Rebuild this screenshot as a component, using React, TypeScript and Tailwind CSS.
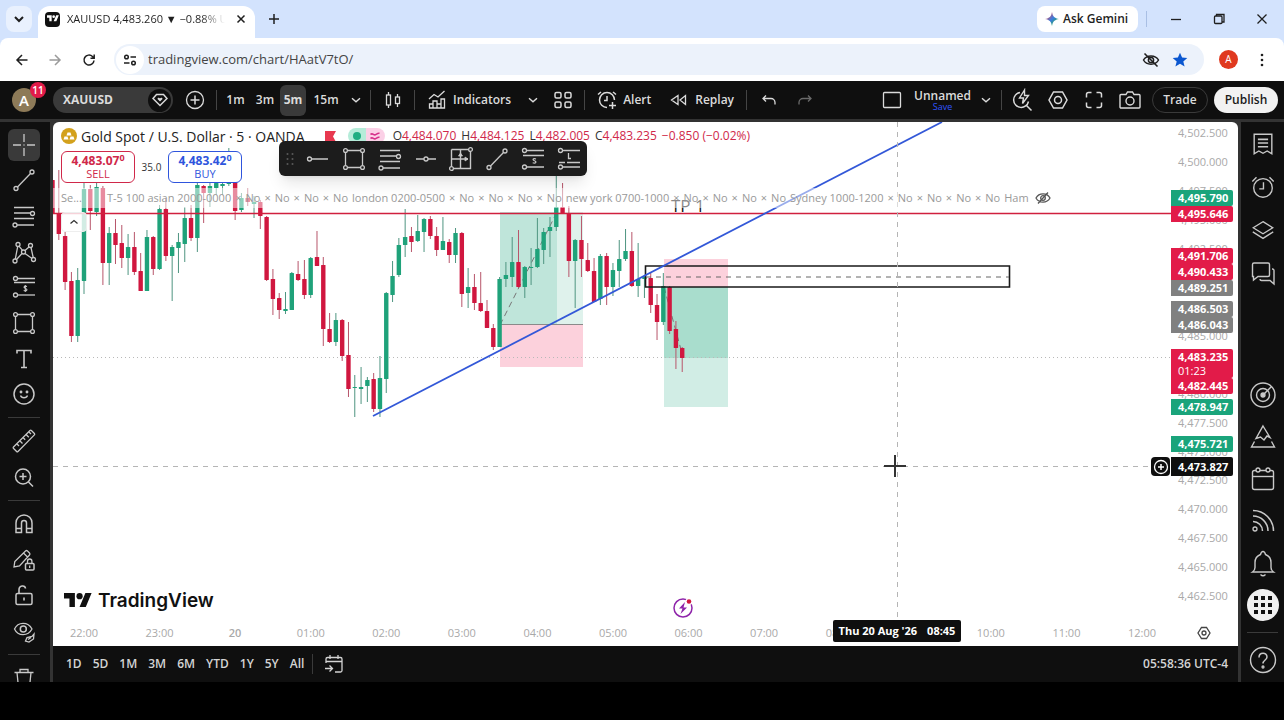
import React from "react";

type Candle = [number, number, number, number, 0 | 1];

/* Five-minute bars: body top, body bottom, wick top, wick bottom, 1 = up bar. */
const FIRST_BAR = -5;
const CANDLES: Candle[] = [
  [180, 214, 167, 235, 0], [213, 234, 170, 240, 0], [236, 282, 232, 290, 0], [281, 336, 272, 342, 0],
  [280, 336, 268, 342, 1], [189, 281, 182, 294, 1], [189, 211, 185, 230, 0], [187, 212, 183, 216, 1],
  [188, 263, 186, 285, 0], [233, 263, 227, 285, 1], [233, 245, 219, 264, 0], [243, 258, 225, 268, 0],
  [247, 258, 234, 275, 1], [247, 272, 232, 275, 0], [271, 291, 253, 291, 0], [237, 291, 230, 291, 1],
  [237, 269, 236, 275, 0], [209, 269, 205, 270, 1], [209, 256, 198, 261, 0], [247, 256, 245, 301, 1],
  [242, 248, 233, 273, 1], [218, 244, 207, 262, 1], [218, 238, 205, 241, 0], [185, 238, 180, 252, 1],
  [186, 193, 185, 223, 0], [186, 193, 182, 207, 1], [183, 188, 176, 195, 1], [184, 186, 176, 195, 1],
  [170, 184, 148, 186, 1], [170, 211, 160, 220, 0], [198, 210, 193, 212, 1], [198, 202, 188, 206, 0],
  [202, 204, 196, 218, 1], [202, 216, 200, 229, 0], [217, 280, 216, 281, 0], [279, 299, 269, 315, 0],
  [298, 310, 293, 319, 0], [309, 311, 292, 314, 1], [273, 310, 272, 310, 1], [274, 280, 261, 281, 0],
  [279, 295, 260, 299, 0], [258, 295, 257, 298, 1], [257, 266, 231, 266, 0], [265, 329, 257, 346, 0],
  [329, 342, 313, 343, 0], [320, 342, 313, 346, 1], [320, 356, 319, 361, 0], [355, 389, 322, 397, 0],
  [387, 388, 375, 417, 1], [387, 389, 367, 404, 1], [380, 386, 377, 402, 1], [379, 409, 373, 412, 0],
  [378, 409, 356, 417, 1], [293, 379, 292, 393, 1], [276, 295, 261, 302, 1], [245, 275, 238, 277, 1],
  [237, 245, 209, 257, 1], [236, 242, 227, 252, 0], [231, 241, 215, 242, 1], [219, 232, 218, 252, 1],
  [219, 236, 216, 239, 0], [236, 250, 227, 256, 0], [241, 250, 217, 250, 1], [242, 255, 239, 263, 0],
  [233, 255, 228, 263, 1], [233, 294, 232, 307, 0], [287, 293, 268, 308, 1], [287, 303, 274, 310, 0],
  [303, 311, 272, 312, 0], [311, 328, 300, 328, 0], [328, 347, 324, 350, 0], [279, 347, 277, 347, 1],
  [275, 279, 262, 287, 1], [262, 277, 237, 287, 1], [262, 287, 230, 288, 0], [267, 287, 266, 298, 1],
  [267, 268, 248, 285, 1], [249, 267, 218, 268, 1], [232, 250, 228, 264, 1], [227, 231, 217, 257, 1],
  [207, 227, 176, 231, 1], [207, 213, 183, 214, 0], [213, 261, 206, 277, 0], [240, 261, 239, 308, 1],
  [240, 259, 216, 277, 0], [260, 271, 243, 272, 0], [271, 302, 258, 302, 0], [256, 299, 254, 305, 1],
  [256, 287, 253, 305, 0], [270, 287, 263, 296, 1], [259, 271, 240, 287, 1], [251, 259, 229, 261, 1],
  [251, 286, 232, 287, 0], [279, 286, 243, 297, 1], [277, 279, 275, 298, 1], [278, 305, 272, 313, 0],
  [305, 322, 294, 340, 0], [286, 322, 273, 325, 1], [287, 331, 286, 334, 0], [329, 348, 321, 369, 0],
  [348, 358, 347, 372, 0],
];

const HOURS = ["22:00", "23:00", "20", "01:00", "02:00", "03:00", "04:00", "05:00", "06:00", "07:00", "08:00", "09:00", "10:00", "11:00", "12:00"];
const TICKS = [4502.5, 4500, 4497.5, 4495, 4492.5, 4490, 4487.5, 4485, 4482.5, 4480, 4477.5, 4475, 4472.5, 4470, 4467.5, 4465, 4462.5];
const fmt = (n: number) => n.toLocaleString("en-US", { minimumFractionDigits: 3 });

const TAGS: { y: number; text: string; cls: string; sub?: string }[] = [
  { y: 68, text: "4,495.790", cls: "bg-[#1aa47b]" },
  { y: 84, text: "4,495.646", cls: "bg-[#e21b49]" },
  { y: 126, text: "4,491.706", cls: "bg-[#e21b49]" },
  { y: 142, text: "4,490.433", cls: "bg-[#e21b49]" },
  { y: 158, text: "4,489.251", cls: "bg-[#808080]" },
  { y: 179, text: "4,486.503", cls: "bg-[#808080]" },
  { y: 195, text: "4,486.043", cls: "bg-[#808080]" },
  { y: 227, text: "4,483.235", cls: "bg-[#e21b49]", sub: "01:23" },
  { y: 256, text: "4,482.445", cls: "bg-[#e21b49]" },
  { y: 277, text: "4,478.947", cls: "bg-[#1aa47b]" },
  { y: 314, text: "4,475.721", cls: "bg-[#1aa47b]" },
];

function Icon({ children, className = "size-7", box = 28 }: { children: React.ReactNode; className?: string; box?: number }) {
  return (
    <svg aria-hidden="true" viewBox={`0 0 ${box} ${box}`} className={`shrink-0 ${className}`} fill="none" stroke="currentColor" strokeWidth="1.3">
      {children}
    </svg>
  );
}

const Chevron = () => <Icon className="size-3" box={12}><path d="M2 4.2 6 7.8l4-3.6" strokeWidth="1.4" /></Icon>;

const CrossIcon = () => <Icon><path d="M14 3v8M14 17v8M3 14h8M17 14h8M13.5 14h1" /></Icon>;
const TrendIcon = () => <Icon><circle cx="6" cy="22.5" r="2" /><circle cx="22" cy="6" r="2" /><path d="M7.5 21 20.5 7.5" /></Icon>;
const FibIcon = () => <Icon><path d="M4 5.5h20M4 11h16M4 16.5h20M7 23h17" /><circle cx="22.5" cy="11.5" r="2" /><circle cx="5" cy="23" r="2" /></Icon>;
const PatternIcon = () => (
  <Icon>
    <circle cx="5" cy="23" r="2" /><circle cx="8" cy="6.5" r="2" /><circle cx="13.5" cy="14" r="2" /><circle cx="20.5" cy="7.5" r="2" /><circle cx="23.5" cy="21.5" r="2" />
    <path d="M5.3 21 7.7 8.5M9 8.2l3.5 4.2M15 12.5l4-3.5M21 9.5l2.2 10M6.5 21.5l5.5-6M15 15.5l7 5" />
  </Icon>
);
const ForecastIcon = () => (
  <Icon>
    <circle cx="5.5" cy="5.5" r="2" /><path d="M7.5 5.5H25M4 9.5h21" /><circle cx="5.5" cy="22" r="2" /><path d="M7.5 22H25" />
    <path d="M17 13.5c-3-1.200-4 1.300-1.500 2s1.500 3.300-1.800 2M15.300 12v7" strokeWidth="1.1" />
  </Icon>
);
const ShortIcon = () => (
  <Icon>
    <circle cx="5.5" cy="5.5" r="2" /><path d="M7.5 5.5H25M4 10.500h21" /><circle cx="5.5" cy="22" r="2" /><path d="M7.5 22H25" />
    <path d="M17 14c-3-1.200-4 1-1.500 1.800s1.500 3-1.800 2" strokeWidth="1.2" />
  </Icon>
);
const LongIcon = () => <Icon><circle cx="5.5" cy="5.5" r="2" /><path d="M7.5 5.5H25M13.5 8v5.500H16M12 17.5h13M4 17.5h6M7.5 22H25" /><circle cx="5.5" cy="22" r="2" /></Icon>;
const RectIcon = () => <Icon><path d="M7.5 5.5h13M7.5 22.5h13M5.5 7.5v13M22.5 7.5v13" /><circle cx="5.5" cy="5.5" r="1.9" /><circle cx="22.5" cy="5.5" r="1.9" /><circle cx="5.5" cy="22.5" r="1.9" /><circle cx="22.5" cy="22.5" r="1.9" /></Icon>;
const TextIcon = () => <Icon><path d="M7 8.500V5.500h14v3M14 5.500v17M11 22.500h6" strokeWidth="1.6" /></Icon>;
const SmileIcon = () => <Icon><circle cx="14" cy="14" r="10" strokeWidth="1.5" /><path d="M10.500 15.500c1 3 6 3 7 0" /><circle cx="11" cy="12" r=".8" fill="currentColor" /><circle cx="17" cy="12" r=".8" fill="currentColor" /></Icon>;
const RulerIcon = () => <Icon><path d="M3.500 20 20 3.500a1 1 0 0 1 1.400 0l3 3a1 1 0 0 1 0 1.400L8 24.500a1 1 0 0 1-1.400 0l-3-3a1 1 0 0 1-.1-1.500ZM7 17l2 2M10 14l2.500 2.500M13.200 10.800l2 2M16.300 7.700l2.500 2.500M19 5l2 2" /></Icon>;
const ZoomIcon = () => <Icon><circle cx="13" cy="13.500" r="7.500" strokeWidth="1.500" /><path d="M18.500 19l4.500 4.500M13 10v7M9.500 13.500h7" strokeWidth="1.500" /></Icon>;
const MagnetIcon = () => <Icon><path d="M6 22.500V13a8 8 0 0 1 16 0v9.500h-5.500V13a2.500 2.500 0 0 0-5 0v9.500ZM6 18.500h5.500M16.500 18.500H22" strokeWidth="1.500" /></Icon>;
const PencilLockIcon = () => <Icon><path d="m4 21 .8-5.500L15.500 5a1.500 1.500 0 0 1 2 0l2 2a1.500 1.500 0 0 1 0 2L9.500 20ZM13.500 7l4 4" /><rect x="15.500" y="17.500" width="8.500" height="6.500" rx="1" strokeWidth="1.500" /><path d="M17.500 17.500v-2.300a2.200 2.200 0 0 1 4.400 0v2.300M19.700 19.500v2.500" /></Icon>;
const UnlockIcon = () => <Icon><rect x="6" y="12.500" width="16" height="11" rx="1.500" strokeWidth="1.500" /><path d="M9 12.500V9c0-5 6-5 6.500-1.500M14 16.500v3" strokeWidth="1.600" /></Icon>;
const EyeBrushIcon = () => <Icon><path d="M4.500 12C8 4.500 18 4.500 22 12 18 19.500 8 19.500 4.500 12Z" /><circle cx="13.300" cy="12" r="3" strokeWidth="1.500" /><path d="m15.500 24 1.500-3.500 5-1 2-2.500-.5 5-4.500 3ZM18 22.500l3-2" /></Icon>;
const TrashIcon = () => <Icon><path d="M4.500 8.500h19M10 8.500V5.500h8v3M7 8.500l1.500 15h11l1.500-15" /></Icon>;
const HLineIcon = () => <Icon><circle cx="5.500" cy="14" r="2" /><path d="M7.500 14H24" /></Icon>;
const HRayIcon = () => <Icon><circle cx="14" cy="14" r="2" /><path d="M4 14h8M16 14h8" /></Icon>;
const RangeIcon = () => <Icon><path d="M4.500 4.500h16.500M4.500 4.500v17M23.500 7v16.500H7M13.500 5v18M5 14h16" strokeWidth="1.400" /><path d="m11.500 11 2-3 2 3ZM18 12l3 2-3 2Z" fill="currentColor" strokeWidth=".8" /><circle cx="23.500" cy="4.500" r="1.900" /><circle cx="4.500" cy="23.500" r="1.900" /></Icon>;

function Tool({ label, children, active = false }: { label: string; children: React.ReactNode; active?: boolean }) {
  return (
    <button aria-label={label} className="flex min-h-0 flex-1 items-center justify-center">
      <span className={active ? "flex size-8 items-center justify-center rounded-md bg-[#3a3a3a]" : "flex items-center justify-center"}>{children}</span>
    </button>
  );
}

function TvMark({ className }: { className: string }) {
  return (
    <svg aria-hidden="true" viewBox="0 0 36 28" className={className} fill="currentColor">
      <path d="M14 22H7V11H0V4h14v18ZM28 22h-8l7.500-18h8L28 22Z" /><circle cx="20" cy="8" r="4" />
    </svg>
  );
}

function BrowserChrome() {
  return (
    <header className="shrink-0 bg-[#d3e3fd] font-['Open_Sans',sans-serif] text-[#1f1f1f]">
      <div className="flex h-[38px] items-center">
        <button aria-label="Search tabs" className="ml-1.5 flex size-[26px] items-center justify-center rounded-lg bg-[#e9f1fe]">
          <Icon className="size-3" box={12}><path d="m2 4 4 4 4-4" strokeWidth="2" /></Icon>
        </button>
        <div className="ml-1.5 flex h-8 w-[217px] items-center self-end rounded-t-xl bg-white pb-1.5 pl-[7px]">
          <span className="flex size-[15px] items-center justify-center rounded-sm bg-[#111] text-white"><TvMark className="w-3" /></span>
          <span className="ml-[7px] w-[158px] overflow-hidden bg-linear-to-r from-[#1f1f1f] from-85% to-transparent bg-clip-text text-[11px] whitespace-nowrap text-transparent">XAUUSD 4,483.260 ▼ −0.88% U</span>
          <button aria-label="Close tab" className="ml-2.5 flex size-3 items-center justify-center"><Icon className="size-3" box={12}><path d="m2.500 2.500 7 7M9.500 2.500l-7 7" strokeWidth="1.500" /></Icon></button>
        </div>
        <button aria-label="New tab" className="ml-[11px] flex size-4 items-center justify-center"><Icon className="size-3.5" box={14}><path d="M7 2v10M2 7h10" strokeWidth="1.500" /></Icon></button>
        <button className="ml-auto flex h-[26px] w-[101px] items-center rounded-lg bg-white pl-2 text-[12px] font-semibold">
          <svg aria-hidden="true" viewBox="0 0 14 14" className="mr-1 size-3.5"><defs><linearGradient id="gem" x1="0" y1="0" x2="1" y2="1"><stop offset=".2" stopColor="#c9506a" /><stop offset=".5" stopColor="#3b7de0" /><stop offset=".8" stopColor="#22a55b" /></linearGradient></defs><path d="M7 0c.8 4.500 2.500 6.200 7 7-4.500.8-6.200 2.500-7 7-.8-4.500-2.500-6.200-7-7 4.500-.8 6.200-2.500 7-7Z" fill="url(#gem)" /></svg>
          Ask Gemini
        </button>
        <span className="ml-2 h-4 w-px bg-[#a9bfe4]" />
        <button aria-label="Minimize" className="ml-[7px] flex h-8 w-[43px] items-center justify-center"><Icon className="size-3" box={12}><path d="M1 6.500h10" /></Icon></button>
        <button aria-label="Restore" className="flex h-8 w-[43px] items-center justify-center"><Icon className="size-3" box={12}><rect x="1.500" y="3" width="7.500" height="7.500" rx="1" /><path d="M3.500 3V1.500H11V9H9" /></Icon></button>
        <button aria-label="Close window" className="mr-px flex h-8 w-[43px] items-center justify-center"><Icon className="size-3" box={12}><path d="m1.500 1.500 9 9M10.500 1.500l-9 9" /></Icon></button>
      </div>
      <div className="flex h-[43px] items-center rounded-t-lg bg-white">
        <button aria-label="Back" className="ml-3.5 flex size-4 items-center justify-center"><Icon className="size-4" box={16}><path d="M13.500 8H3M8 3 3 8l5 5" strokeWidth="1.500" /></Icon></button>
        <button aria-label="Forward" className="ml-[17px] flex size-4 items-center justify-center text-[#9b9b9b]"><Icon className="size-4" box={16}><path d="M2.500 8H13M8 3l5 5-5 5" strokeWidth="1.500" /></Icon></button>
        <button aria-label="Reload" className="ml-[18px] flex size-4 items-center justify-center"><Icon className="size-4" box={16}><path d="M13 8.500A5 5 0 1 1 11.500 4.500L13 6M13.200 2.500V6.200H9.500" strokeWidth="1.500" /></Icon></button>
        <div className="ml-[17px] flex h-[31px] flex-1 items-center rounded-full bg-[#ecf2fb] pr-4">
          <span className="ml-0.5 flex size-7 items-center justify-center rounded-full bg-white"><Icon className="size-3.5" box={14}><circle cx="3.500" cy="4" r="1.800" strokeWidth="1.500" /><path d="M7.500 4H13M1 10h5.500" strokeWidth="1.500" /><circle cx="10.500" cy="10" r="1.800" strokeWidth="1.500" /></Icon></span>
          <input aria-label="Address" defaultValue="tradingview.com/chart/HAatV7tO/" className="ml-1 min-w-0 flex-1 bg-transparent text-[13px] text-[#444] outline-none" />
          <Icon className="size-[18px]" box={18}><path d="M1.500 9c3-5.500 12-5.500 15 0-3 5.500-12 5.500-15 0Z" strokeWidth="1.500" /><circle cx="9" cy="9" r="2.600" strokeWidth="1.500" /><path d="m2.500 2.500 13 13" strokeWidth="1.600" /></Icon>
          <svg aria-hidden="true" viewBox="0 0 16 16" className="ml-3 size-4" fill="#0b57d0"><path d="m8 .8 2.100 4.800 5.200.4-4 3.400 1.300 5.100L8 11.700l-4.600 2.800 1.300-5.100-4-3.400 5.200-.4Z" /></svg>
        </div>
        <span className="ml-[15px] flex size-[19px] items-center justify-center rounded-full bg-[#e0391f] text-[10px] text-white">A</span>
        <button aria-label="Browser menu" className="mr-3.5 ml-4 flex w-4 justify-center"><svg aria-hidden="true" viewBox="0 0 4 14" className="h-3.5 w-1" fill="currentColor"><circle cx="2" cy="2" r="1.300" /><circle cx="2" cy="7" r="1.300" /><circle cx="2" cy="12" r="1.300" /></svg></button>
      </div>
    </header>
  );
}

const Sep = () => <span className="h-5 w-px shrink-0 bg-[#454545]" />;

function TopBar() {
  return (
    <div className="flex h-[38px] shrink-0 items-center bg-[#0f0f0f] text-[13px] font-semibold text-[#dbdbdb]">
      <button aria-label="Account" className="relative ml-3 flex size-6 items-center justify-center rounded-full bg-[#8d7a58] text-[15px] text-white">
        A<span className="absolute -top-1.5 left-[18px] flex size-4 items-center justify-center rounded-full bg-[#e21b49] text-[10px]">11</span>
      </button>
      <button className="ml-[17px] flex h-[26px] w-[120px] items-center justify-between rounded-full bg-[#3a3a3a] pr-0.5 pl-2.5 text-[12px] font-bold">
        XAUUSD
        <span className="flex size-[23px] items-center justify-center rounded-full bg-[#0f0f0f]"><Icon className="size-4" box={16}><path d="M4.500 2.500h7L15 6.500 8 13.500 1 6.500Z" strokeWidth="1.500" /><path d="M8 9.500 5.500 7c0-1.700 2-1.700 2.500-.5.500-1.200 2.500-1.200 2.500.5Z" fill="currentColor" stroke="none" /></Icon></span>
      </button>
      <button aria-label="Compare" className="flex w-[43px] justify-center"><Icon className="size-5" box={20}><circle cx="10" cy="10" r="8.500" /><path d="M10 5.500v9M5.500 10h9" strokeWidth="1.500" /></Icon></button>
      <Sep />
      <div className="ml-1 flex items-center text-[12px]">
        <button className="w-[29px]">1m</button>
        <button className="w-[30px]">3m</button>
        <button className="h-[31px] w-[26px] rounded-md bg-[#3a3a3a] font-bold">5m</button>
        <button className="w-[40px]">15m</button>
        <button aria-label="Intervals" className="flex w-5 justify-center"><Chevron /></button>
      </div>
      <span className="w-1" />
      <Sep />
      <button aria-label="Chart type" className="flex w-[43px] justify-center"><Icon className="size-5" box={20}><rect x="3.500" y="5" width="4" height="10" /><path d="M5.500 2v3M5.500 15v3M14.500 4v3M14.500 13.500V17" /><rect x="12.500" y="7" width="4" height="6.500" /></Icon></button>
      <Sep />
      <button className="ml-3 flex items-center gap-1.5 text-[12px]"><Icon className="size-5" box={20}><path d="M2 9 7 4.500l4 2.500L17.500 1M2.500 18v-4h3.500v4ZM6 18v-7h4v7M10 14h4v4M14 18v-9h3.500v9ZM2 18h16" /></Icon>Indicators</button>
      <button aria-label="Indicator templates" className="ml-3.5 flex w-4 justify-center"><Chevron /></button>
      <button aria-label="Layouts" className="ml-3 flex w-5 justify-center"><Icon className="size-5" box={20}><rect x="2" y="2.500" width="6" height="5.500" rx="1.500" strokeWidth="1.500" /><rect x="12" y="2.500" width="6" height="5.500" rx="1.500" strokeWidth="1.500" /><rect x="2" y="12" width="6" height="5.500" rx="1.500" strokeWidth="1.500" /><rect x="12" y="12" width="6" height="5.500" rx="1.500" strokeWidth="1.500" /></Icon></button>
      <span className="w-[11px]" />
      <Sep />
      <button className="ml-3 flex items-center gap-1.5 text-[12px]"><Icon className="size-5" box={20}><path d="M17.500 10A7.500 7.500 0 1 0 10 17.500M10 6v4.500H7M1 4.500 4 2M16 2l3 2.500M15.500 12v7M12 15.500h7" strokeWidth="1.500" /></Icon>Alert</button>
      <button className="ml-[18px] flex items-center gap-1.5 text-[12px]"><Icon className="size-5" box={20}><path d="M9 5.500v9L2.500 10ZM16.500 5.500v9L11 10Z" /></Icon>Replay</button>
      <span className="w-3" />
      <Sep />
      <button aria-label="Undo" className="ml-3 flex w-5 justify-center"><Icon className="size-5" box={20}><path d="M7 5.500 4 8.500l3 3M4 8.500h8a4 4 0 0 1 4 4v2" /></Icon></button>
      <button aria-label="Redo" className="ml-4 flex w-5 justify-center text-[#6a6a6a]"><Icon className="size-5" box={20}><path d="m13 5.500 3 3-3 3M16 8.500H8a4 4 0 0 0-4 4v2" /></Icon></button>

      <div className="ml-auto flex items-center">
        <button aria-label="Layout setup" className="flex w-5 justify-center"><Icon className="size-5" box={20}><rect x="1.500" y="2.500" width="17" height="15" rx="1" /></Icon></button>
        <button className="ml-3 flex flex-col items-center text-[12px] leading-[13px]">Unnamed<span className="text-[9px] leading-[9px] font-normal text-[#2f55ff]">Save</span></button>
        <button aria-label="Layouts menu" className="mx-[9px] flex w-3 justify-center"><Chevron /></button>
        <Sep />
        <button aria-label="Quick search" className="ml-2 flex w-6 justify-center"><Icon className="size-6" box={24}><path d="M10 4.500a7.500 7.500 0 1 0 8.500 9M16 17l5.500 5.500" strokeWidth="1.500" /><path d="M14.500 2 9.500 10h4l-1 5.500 6-8h-4Z" strokeWidth="1.400" /></Icon></button>
        <button aria-label="Settings" className="ml-3 flex w-6 justify-center"><Icon className="size-6" box={24}><path d="M7.500 4h9L21 12l-4.500 8h-9L3 12Z" strokeWidth="1.500" /><circle cx="12" cy="12" r="3.500" strokeWidth="1.500" /></Icon></button>
        <button aria-label="Fullscreen" className="ml-3 flex w-6 justify-center"><Icon className="size-6" box={24}><path d="M4.500 9.500v-3a2 2 0 0 1 2-2h3M14.500 4.500h3a2 2 0 0 1 2 2v3M19.500 14.500v3a2 2 0 0 1-2 2h-3M9.500 19.500h-3a2 2 0 0 1-2-2v-3" strokeWidth="1.500" /></Icon></button>
        <button aria-label="Snapshot" className="ml-3 flex w-6 justify-center"><Icon className="size-6" box={24}><path d="M3 6.500h5L9.500 4h5L16 6.500h5a1 1 0 0 1 1 1V19a1 1 0 0 1-1 1H3a1 1 0 0 1-1-1V7.500a1 1 0 0 1 1-1Z" strokeWidth="1.400" /><circle cx="12" cy="13" r="4" strokeWidth="1.400" /></Icon></button>
        <button className="ml-2.5 h-[26px] w-14 rounded-full border border-[#3a3a3a] text-[12px]">Trade</button>
        <button className="mr-1.5 ml-1.5 h-[26px] w-16 rounded-full bg-[#f2f2f2] text-[12px] text-[#1a1a1a]">Publish</button>
      </div>
    </div>
  );
}

function LeftBar() {
  return (
    <nav aria-label="Drawing tools" className="flex w-[50px] shrink-0 flex-col overflow-hidden bg-[#0f0f0f] pr-0.5 text-[#c8c8c8]">
      <div className="mt-[5px] flex h-[285px] shrink-0 flex-col">
        <Tool label="Cursor" active><CrossIcon /></Tool>
        <Tool label="Trend line"><TrendIcon /></Tool>
        <Tool label="Fib retracement"><FibIcon /></Tool>
        <Tool label="Patterns"><PatternIcon /></Tool>
        <Tool label="Forecasting"><ForecastIcon /></Tool>
        <Tool label="Shapes"><RectIcon /></Tool>
        <Tool label="Text"><TextIcon /></Tool>
        <Tool label="Icons"><SmileIcon /></Tool>
      </div>
      <span className="mx-2 my-[5px] h-px shrink-0 bg-[#3a3a3a]" />
      <div className="flex h-[72px] shrink-0 flex-col">
        <Tool label="Measure"><RulerIcon /></Tool>
        <Tool label="Zoom in"><ZoomIcon /></Tool>
      </div>
      <span className="mx-2 my-[5px] h-px shrink-0 bg-[#3a3a3a]" />
      <div className="flex h-[143px] shrink-0 flex-col">
        <Tool label="Magnet"><MagnetIcon /></Tool>
        <Tool label="Keep drawing"><PencilLockIcon /></Tool>
        <Tool label="Lock drawings"><UnlockIcon /></Tool>
        <Tool label="Hide drawings"><EyeBrushIcon /></Tool>
      </div>
      <span className="mx-2 my-[5px] h-px shrink-0 bg-[#3a3a3a]" />
      <div className="flex h-9 shrink-0 flex-col"><Tool label="Remove"><TrashIcon /></Tool></div>
    </nav>
  );
}

function SideTool({ label, children, h = "h-[42px]" }: { label: string; children: React.ReactNode; h?: string }) {
  return <button aria-label={label} className={`flex shrink-0 items-center justify-center ${h}`}>{children}</button>;
}

function RightBar() {
  return (
    <nav aria-label="Panels" className="flex w-[43px] shrink-0 flex-col bg-[#0f0f0f] text-[#c8c8c8]">
      <SideTool label="Watchlist" h="h-[43px]"><Icon className="size-[26px]"><path d="M4.500 3.500h19v21l-5-3-4.500 2.500-4.500-2.500-5 3Z" strokeWidth="1.500" /><path d="M8.500 9h11M8.500 13h11M8.500 17h11" strokeWidth="1.700" /></Icon></SideTool>
      <SideTool label="Alerts" h="h-[43px]"><Icon className="size-[26px]"><circle cx="14" cy="15" r="10" strokeWidth="1.500" /><path d="M14.500 9v7H10M2.500 8 7 3.500M21 3.500 25.500 8" strokeWidth="1.500" /></Icon></SideTool>
      <SideTool label="Object tree" h="h-[43px]"><Icon className="size-[26px]"><path d="m14 5 10.500 6.500L14 18 3.500 11.500ZM3 16l11 7 11-7" strokeWidth="1.400" /></Icon></SideTool>
      <SideTool label="Chats" h="h-[43px]"><Icon><path d="M5 4h14a1.500 1.500 0 0 1 1.500 1.500V16a1.500 1.500 0 0 1-1.500 1.500H9L4.500 21v-3.500H3.500V5.500A1.500 1.500 0 0 1 5 4Z" strokeWidth="1.400" /><path d="M23 10h.5a1.500 1.500 0 0 1 1.500 1.500V25l-4-3.500h-8.500a1.500 1.500 0 0 1-1.500-1.500" strokeWidth="1.400" /></Icon></SideTool>
      <div className="mt-auto flex flex-col pb-px">
        <SideTool label="Screener"><Icon><circle cx="14" cy="14" r="12" strokeWidth="1.400" /><circle cx="14" cy="14" r="6.500" strokeWidth="1.400" /><circle cx="14" cy="14" r="2" fill="currentColor" /><path d="m14 14 8.500-8.500" strokeWidth="1.500" /></Icon></SideTool>
        <SideTool label="Ideas"><Icon><path d="m14 3 7 11.500-3-1.500-3 4-3.500-3-4.500 1.500ZM5.500 18.500 2.500 24h23l-3-5.500" strokeWidth="1.400" /></Icon></SideTool>
        <SideTool label="Calendar"><Icon><rect x="3.500" y="5.500" width="21" height="19" rx="2" strokeWidth="1.400" /><path d="M3.500 11.500h21" strokeWidth="1.400" /><circle cx="9" cy="5" r="2" fill="#0f0f0f" /><circle cx="19" cy="5" r="2" fill="#0f0f0f" /></Icon></SideTool>
        <SideTool label="News"><Icon><circle cx="6" cy="22" r="2" /><path d="M4 3.500A20.500 20.500 0 0 1 24.500 24M4 9A15 15 0 0 1 19 24M4 14.500A9.500 9.500 0 0 1 13.500 24" strokeWidth="1.500" /></Icon></SideTool>
        <SideTool label="Notifications"><Icon><path d="M3.500 23c1.500-1 2.500-2 2.500-4.500v-5C6 9 9 6.500 11.500 5.500 12 3.500 13 2.500 14 2.500s2 1 2.500 3C19 6.500 22 9 22 13.500v5c0 2.500 1 3.500 2.500 4.500ZM11.500 25.500c1.500 1.500 3.500 1.500 5 0" strokeWidth="1.400" /></Icon></SideTool>
        <SideTool label="Apps"><span className="grid size-8 grid-cols-[4px_4px_4px] place-content-center gap-[3px] rounded-full bg-[#f0f0f0]">{Array.from({ length: 9 }, (_, i) => <i key={i} className="size-1 bg-[#111]" />)}</span></SideTool>
        <span className="mx-1.5 my-1.5 h-px bg-[#3a3a3a]" />
        <SideTool label="Help"><Icon><circle cx="14" cy="14" r="12.500" strokeWidth="1.400" /><path d="M10 11.500c0-5.500 8-5.500 8-.5 0 3-4 3-4 6.500" strokeWidth="1.500" /><circle cx="14" cy="21" r="1" /></Icon></SideTool>
      </div>
    </nav>
  );
}

/* Drawing coordinates count from the window's corner; the group shifts them to the pane. */
function ChartCanvas() {
  return (
    <svg aria-label="XAUUSD 5 minute chart" className="absolute inset-0 h-full w-full">
      <g transform="translate(-53 -122)">
        <rect x="500" y="212" width="83" height="113" fill="#1aa47b" fillOpacity=".14" />
        <rect x="500" y="212" width="57" height="113" fill="#1aa47b" fillOpacity=".16" />
        <rect x="500" y="325" width="83" height="42" fill="#f23d6d" fillOpacity=".24" />
        <path d="M500 324.500h83" stroke="#8a8a8a" />
        <rect x="664" y="259" width="64" height="28" fill="#f23d6d" fillOpacity=".24" />
        <rect x="664" y="287" width="64" height="120" fill="#1aa47b" fillOpacity=".2" />
        <rect x="664" y="287" width="64" height="71" fill="#1aa47b" fillOpacity=".22" />
        <path d="M500 325 557 212M664 287l19 70" stroke="#777" strokeDasharray="6 4" />
        <path d="M53 357.500h1118" stroke="#b8b8b8" strokeDasharray="1 3" />
        {CANDLES.map(([top, bottom, high, low, up], i) => {
          const x = 84 + (i + FIRST_BAR) * 6.297;
          const fill = up ? "#1fa27a" : "#d0173f";
          return (
            <g key={i}>
              <rect x={x - 0.5} y={high} width="1" height={low - high} fill={up ? "#4f9581" : "#b8566b"} />
              <rect x={x - 2.2} y={top} width="4.400" height={Math.max(1, bottom - top)} rx=".5" fill={fill} />
            </g>
          );
        })}
        <path d="M53 213.500h1118" stroke="#d0203f" strokeWidth="1.600" />
        <path d="M645.500 266h364v21h-364Z" fill="none" stroke="#1a1a1a" strokeWidth="1.600" />
        <path d="M646 277h363" stroke="#666" strokeDasharray="5 5" />
        <path d="M373 416 942 122" stroke="#3358d8" strokeWidth="1.800" />
        <path d="M53 466.500h1097M897.500 122v498" stroke="#b5b5b5" strokeDasharray="5 5" />
        <circle cx="683" cy="608" r="9" fill="none" stroke="#8e24aa" strokeWidth="1.500" />
        <path d="m685 602-6 6.500h3.500L680.500 614l6.500-6.500h-3.500Z" fill="#8e24aa" />
        <circle cx="689" cy="601.500" r="3.500" fill="#fff" /><circle cx="689" cy="601.500" r="2.300" fill="#d0173f" />
      </g>
    </svg>
  );
}

const Crosses = ({ n }: { n: number }) => <>{Array.from({ length: n }, (_, i) => <React.Fragment key={i}><span>×</span><span>No</span></React.Fragment>)}</>;

function Ohlc({ k, v }: { k: string; v: string }) {
  return <span className="text-[#333]">{k}<span className="text-[#d0284a]">{v}</span></span>;
}

function ChartPane() {
  return (
    <div className="relative min-w-0 flex-1 overflow-hidden">
      <ChartCanvas />
      <div className="absolute top-[75px] left-[618px] text-[17px] leading-[18px] text-[#111]">TP 1</div>
      <div className="relative flex h-7 items-center pl-2 whitespace-nowrap">
        <svg aria-hidden="true" viewBox="0 0 16 16" className="size-4"><circle cx="8" cy="8" r="8" fill="#d3a11c" /><path d="m6.500 4.500-1 3h5l-1-3ZM3.500 8.500l-1 3h5l-1-3ZM9.500 8.500l-1 3h5l-1-3Z" fill="#fff" /></svg>
        <h1 className="ml-1 text-[14px] text-[#222]">Gold Spot / U.S. Dollar · 5 · OANDA</h1>
        <svg aria-hidden="true" viewBox="0 0 11 11" className="ml-5 size-[11px]"><path d="M0 0h11L8 5.500 11 11H0Z" fill="#e8384f" /></svg>
        <span className="ml-3 flex h-4 w-[37px] overflow-hidden rounded-full"><span className="flex flex-1 items-center justify-center bg-[#b5ecd9]"><i className="size-2 rounded-full bg-[#1fae82]" /></span><span className="flex flex-1 items-center justify-center bg-[#fbd0e6] text-[#d6308a]"><Icon className="size-3" box={12}><path d="M1.500 4.500c2-2 3 .8 4.500.4S9 2.500 10.500 3.500M1.500 8.500c2-2 3 .8 4.500.4s3-2.400 4.500-1.400" strokeWidth="1.700" /></Icon></span></span>
        <div className="ml-2 flex gap-[5px] text-[12px]">
          <Ohlc k="O" v="4,484.070" /><Ohlc k="H" v="4,484.125" /><Ohlc k="L" v="4,482.005" /><Ohlc k="C" v="4,483.235" />
          <span className="text-[#d0284a]">−0.850 (−0.02%)</span>
        </div>
      </div>
      <div className="relative flex items-center pt-px pl-2 leading-[13px]">
        <button className="h-8 w-[74px] rounded-md border border-[#d0284a] bg-white text-[11px] text-[#d0284a]"><b className="block text-[12px]">4,483.07<sup className="text-[9px]">0</sup></b>SELL</button>
        <span className="w-[33px] text-center text-[10px] text-[#333]">35.0</span>
        <button className="h-8 w-[74px] rounded-md border border-[#2f55dd] bg-white text-[11px] text-[#2f55dd]"><b className="block text-[12px]">4,483.42<sup className="text-[9px]">0</sup></b>BUY</button>
      </div>
      <div className="relative mt-[5px] flex h-5 w-[1000px] items-center gap-1 bg-white/50 pl-2 text-[11px] whitespace-nowrap text-[#999]">
        <span className="w-[42px]">Se...</span>
        <span>T-5 100 asian 2000-0000</span><Crosses n={4} />
        <span>london 0200-0500</span><Crosses n={4} />
        <span>new york 0700-1000</span><Crosses n={4} />
        <span>Sydney 1000-1200</span><Crosses n={4} />
        <span>Ham</span>
        <Icon className="ml-0.5 size-4 text-[#555]" box={16}><path d="M1 8c3-5.500 11-5.500 14 0-3 5.500-11 5.500-14 0ZM3 13.500l10-11" /><circle cx="8" cy="8" r="2.300" /></Icon>
      </div>
      <button aria-label="Collapse legend" className="relative mt-1 ml-2 flex h-5 w-[26px] items-center justify-center rounded border border-[#eee] bg-white/80 text-[#333]"><Icon className="size-3" box={12}><path d="m2.500 7.500 3.500-3 3.500 3" /></Icon></button>

      <div className="absolute top-[19px] left-[226px] flex h-[35px] w-[308px] items-center rounded-md bg-[#1c1c1c] text-[#c8c8c8] shadow-lg">
        <svg aria-hidden="true" viewBox="0 0 8 14" className="ml-[7px] h-3.5 w-2" fill="#5a5a5a"><circle cx="1.500" cy="2" r="1" /><circle cx="6.500" cy="2" r="1" /><circle cx="1.500" cy="7" r="1" /><circle cx="6.500" cy="7" r="1" /><circle cx="1.500" cy="12" r="1" /><circle cx="6.500" cy="12" r="1" /></svg>
        <span className="w-1.5" />
        <Tool label="Horizontal ray"><HLineIcon /></Tool>
        <Tool label="Rectangle"><RectIcon /></Tool>
        <Tool label="Fib levels"><FibIcon /></Tool>
        <Tool label="Horizontal line"><HRayIcon /></Tool>
        <Tool label="Date and price range"><RangeIcon /></Tool>
        <Tool label="Favorite trend line"><TrendIcon /></Tool>
        <Tool label="Short position"><ShortIcon /></Tool>
        <Tool label="Long position"><LongIcon /></Tool>
      </div>

      <svg aria-hidden="true" viewBox="0 0 22 22" className="absolute top-[333px] left-[831px] size-[22px]" stroke="#333" strokeWidth="2"><path d="M11 0v22M0 11h22" /></svg>
      <button aria-label="Add at price" className="absolute top-[335px] right-px flex h-[19px] w-[19px] items-center justify-center rounded-sm bg-[#0f0f0f] text-white"><Icon className="size-4" box={16}><circle cx="8" cy="8" r="6.500" /><path d="M8 5v6M5 8h6" strokeWidth="1.500" /></Icon></button>
      <div className="absolute bottom-[7px] left-[11px] flex items-center gap-1.5 text-[#111]">
        <TvMark className="w-7" />
        <span className="font-[Inter,sans-serif] text-[19px] leading-6 font-semibold">TradingView</span>
      </div>
    </div>
  );
}

function PriceAxis() {
  return (
    <div className="relative w-[67px] shrink-0 overflow-hidden text-[11px] leading-4">
      {TICKS.map((p) => <span key={p} className="absolute left-[7px] text-[#a9a9a9]" style={{ top: 32 + (4500 - p) * 11.58 }}>{fmt(p)}</span>)}
      {TAGS.map((t) => (
        <div key={t.text} className={`absolute left-0 w-[62px] rounded-r-xs pl-[7px] font-bold text-white ${t.cls}`} style={{ top: t.y }}>
          {t.text}{t.sub ? <span className="block h-[13px] leading-[12px] font-normal">{t.sub}</span> : null}
        </div>
      ))}
      <div className="absolute top-[335px] left-0 h-[19px] w-[62px] rounded-r-xs bg-[#0f0f0f] pl-[7px] leading-[19px] font-bold text-white">4,473.827</div>
    </div>
  );
}

function TimeAxis() {
  return (
    <div className="relative flex h-[26px] shrink-0 items-center overflow-hidden text-[11px] text-[#a9a9a9]">
      {HOURS.map((h, i) => <span key={h} className={`absolute w-10 text-center ${h === "20" ? "font-semibold" : ""}`} style={{ left: 11 + i * 75.57 }}>{h}</span>)}
      <div className="absolute top-0 left-[780px] flex h-[22px] w-[128px] items-center justify-center gap-2.5 rounded-xs bg-[#0f0f0f] font-bold text-white"><span>Thu 20 Aug '26</span><span>08:45</span></div>
      <button aria-label="Axis settings" className="mr-[27px] ml-auto text-[#444]"><Icon className="size-3.5" box={14}><path d="M4.500 1.500h5L13 7l-3.500 5.500h-5L1 7Z" /><circle cx="7" cy="7" r="2" /></Icon></button>
    </div>
  );
}

function BottomBar() {
  return (
    <div className="flex h-9 shrink-0 items-center bg-[#0f0f0f] pr-2.5 pl-[13px] text-[12px] font-semibold text-[#d4d4d4]">
      <div className="flex gap-[11px]">
        {["1D", "5D", "1M", "3M", "6M", "YTD", "1Y", "5Y", "All"].map((r) => <button key={r}>{r}</button>)}
      </div>
      <span className="mr-[11px] ml-2 h-5 w-px bg-[#3a3a3a]" />
      <button aria-label="Go to date"><Icon className="size-5" box={20}><path d="M2 9V5a1.500 1.500 0 0 1 1.500-1.500h13A1.500 1.500 0 0 1 18 5v11.500a1.500 1.500 0 0 1-1.500 1.500H11M2 7.500h16M6 1v4M14 1v4M1 14.500h7M5.500 11.500l3 3-3 3" /></Icon></button>
      <button className="ml-auto">05:58:36 UTC-4</button>
    </div>
  );
}

export default function App() {
  return (
    <div className="flex min-h-screen flex-col bg-black font-['Open_Sans',sans-serif]">
      <BrowserChrome />
      <TopBar />
      <div className="h-[3px] shrink-0 bg-[#333]" />
      <div className="flex h-[560px] shrink-0">
        <LeftBar />
        <div className="w-[3px] shrink-0 bg-[#333]" />
        <main className="flex min-w-0 flex-1 flex-col bg-[#333]">
          <div className="flex min-h-0 flex-1 flex-col overflow-hidden rounded-t-md bg-white">
            <div className="flex min-h-0 flex-1"><ChartPane /><PriceAxis /></div>
            <TimeAxis />
          </div>
          <BottomBar />
        </main>
        <div className="w-[3px] shrink-0 bg-[#333]" />
        <RightBar />
      </div>
    </div>
  );
}
